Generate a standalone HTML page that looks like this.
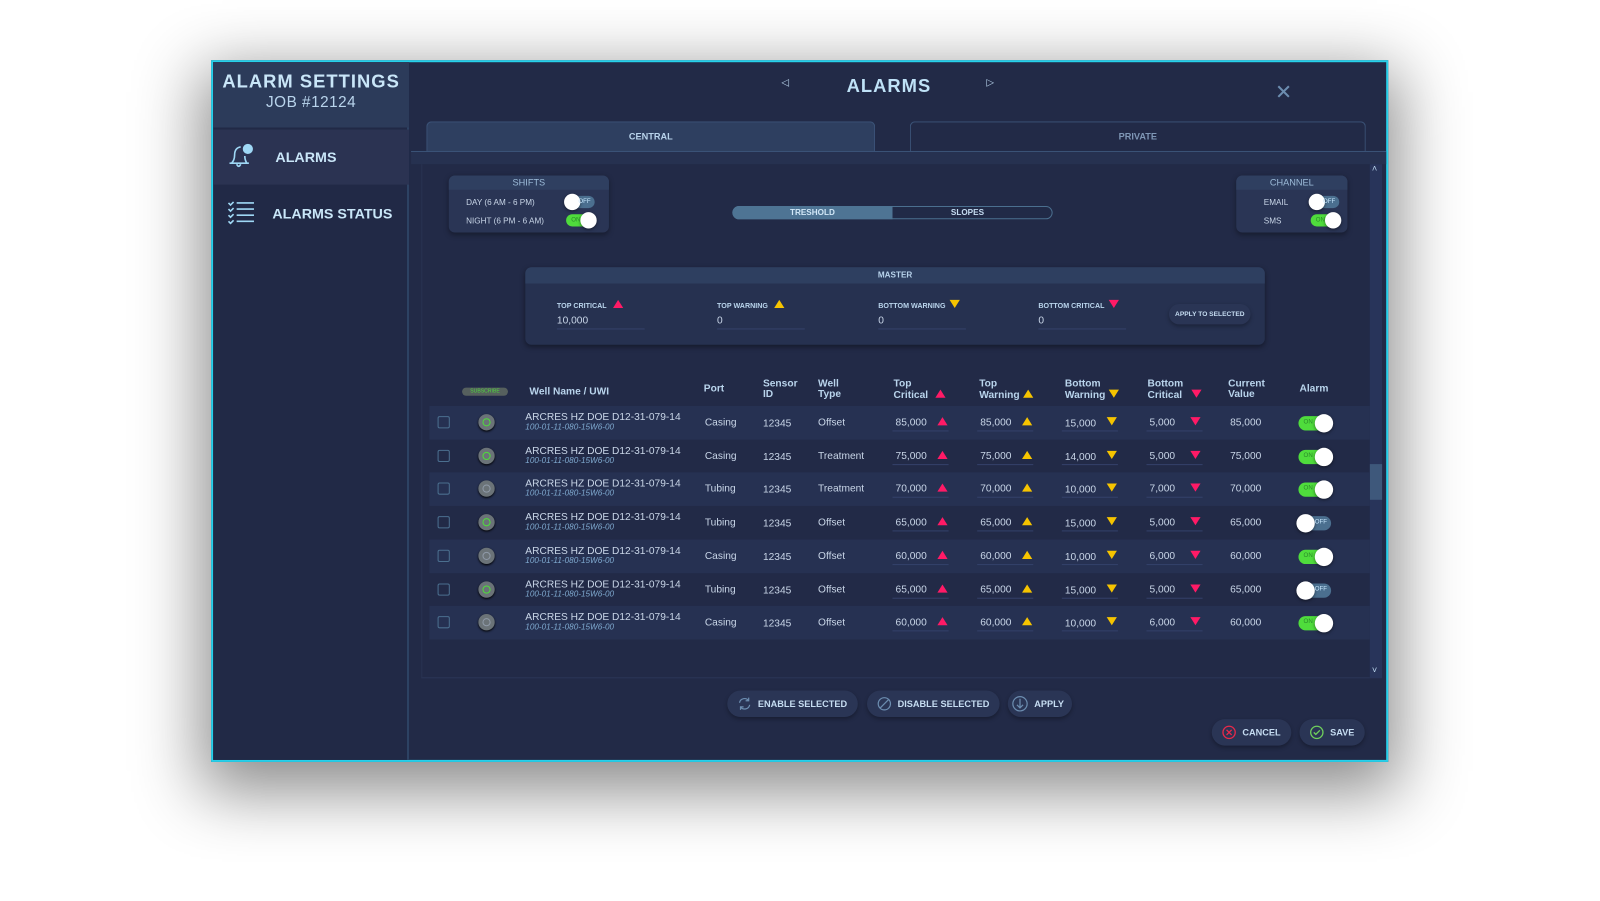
<!DOCTYPE html>
<html><head><meta charset="utf-8">
<style>
*{margin:0;padding:0;box-sizing:border-box}
html,body{width:1600px;height:900px;overflow:hidden;background:#fff;font-family:"Liberation Sans",sans-serif}
#stage{position:absolute;left:0;top:0;width:1569px;height:883px;transform:scale(1.02);transform-origin:0 0}
.a{position:absolute}
.frame{left:207px;top:59px;width:1154px;height:688px;border:2px solid #27d0ea;background:#222a47;box-shadow:0 20px 60px 10px rgba(0,0,0,.45)}
.lt{color:#b9d4ec}
.tg{position:absolute;width:28px;height:12px;border-radius:6px}
.tg.on{background:#4fdc3c}.tg.off{background:#4b6f8f}
.tg b{position:absolute;top:-2px;width:16px;height:16px;border-radius:50%;background:#fff;box-shadow:0 1px 3px rgba(0,0,0,.5)}
.tg.on b{right:-2px}.tg.off b{left:-2px}
.tg i{position:absolute;font-style:normal;font-size:6px;top:3px;color:#c8e8ff}
.tg.on i{left:5px;color:#2a8a2a}.tg.off i{right:4px}
.row{position:absolute;left:421px;width:922px;height:33px}
.row.l{background:#263152}
.c{position:absolute;font-size:10px;color:#c9d6e8}
.h{position:absolute;font-size:10px;font-weight:bold;color:#b9d4ec;line-height:10px}
.up,.dn{display:inline-block;width:0;height:0;border-left:5px solid transparent;border-right:5px solid transparent}
.up{border-bottom:8px solid}.dn{border-top:8px solid}
.r{color:#ff1a66}.y{color:#f6c400}
.ul{position:absolute;height:1px;background:#34416a}
.btn{position:absolute;height:26px;border-radius:13px;background:#2a3555;font-size:9px;font-weight:bold;color:#c6ddf2;display:flex;align-items:center;padding:0 10px;gap:6px;box-shadow:0 2px 4px rgba(0,0,0,.3)}
</style></head><body><div id="stage">
<div class="a frame"></div>
<!-- sidebar -->
<div class="a" style="left:209px;top:61px;width:192px;height:684px;background:#212946;border-right:2px solid #2d4263"></div>
<div class="a" style="left:209px;top:61px;width:192px;height:64px;background:#2c3b5a"></div>
<div class="a lt" style="left:209px;top:70px;width:192px;text-align:center;font-weight:bold;font-size:18px;letter-spacing:1px;color:#c9e6f8">ALARM SETTINGS</div>
<div class="a lt" style="left:209px;top:92px;width:192px;text-align:center;font-size:15px;letter-spacing:.5px">JOB #12124</div>
<div class="a" style="left:209px;top:127px;width:192px;height:54px;background:#2b3352"></div>
<svg class="a" style="left:222px;top:138px" width="30" height="30" viewBox="0 0 30 30"><path d="M5 22 Q8 19 8 14 Q8 7 14 6 M20 22 Q18 19 18 15 M3 22 H22 M10 23 Q12 27 14 23" fill="none" stroke="#9fd8f5" stroke-width="1.6"/><circle cx="21" cy="8" r="5" fill="#9fd8f5"/></svg>
<div class="a" style="left:270px;top:146px;font-size:14px;font-weight:bold;color:#c9e6f8">ALARMS</div>
<svg class="a" style="left:222px;top:196px" width="30" height="24" viewBox="0 0 30 24"><g stroke="#9fd8f5" stroke-width="1.6" fill="none"><path d="M2 3l2 2 3-3M2 9l2 2 3-3M2 15l2 2 3-3M2 21l2 2 3-3"/><path d="M10 3h17M10 9h17M10 15h17M10 21h17"/></g></svg>
<div class="a" style="left:267px;top:201px;font-size:14px;font-weight:bold;color:#c9e6f8">ALARMS STATUS</div>
<!-- top -->
<div class="a" style="left:766px;top:76px;font-size:10px;color:#b9d4ec">◁</div>
<div class="a" style="left:830px;top:74px;font-size:18px;font-weight:bold;letter-spacing:1px;color:#bfe2f7">ALARMS</div>
<div class="a" style="left:967px;top:76px;font-size:10px;color:#b9d4ec">▷</div>
<div class="a" style="left:1250px;top:78px;font-size:20px;color:#6c8db0">✕</div>
<div class="a" style="left:418px;top:119px;width:440px;height:30px;background:#2e3f60;border:1px solid #3c5479;border-bottom:none;border-radius:5px 5px 0 0;text-align:center;font-size:9px;font-weight:bold;line-height:28px;color:#b9d4ec">CENTRAL</div>
<div class="a" style="left:892px;top:119px;width:447px;height:30px;border:1px solid #3c5479;border-bottom:none;border-radius:5px 5px 0 0;text-align:center;font-size:9px;font-weight:bold;line-height:28px;color:#7f97b6">PRIVATE</div>
<div class="a" style="left:403px;top:148px;width:956px;height:1px;background:#3c5479"></div>
<div class="a" style="left:403px;top:149px;width:956px;height:12px;background:#263150"></div>
<div class="a" style="left:413px;top:161px;width:930px;height:504px;border-left:1px solid #283251;border-bottom:1px solid #2b3656"></div>
<!-- scrollbar -->
<div class="a" style="left:1343px;top:161px;width:12px;height:504px;background:#28345a"></div>
<div class="a" style="left:1343px;top:455px;width:12px;height:35px;background:#3e587b"></div>
<div class="a" style="left:1345px;top:160px;font-size:9px;color:#b9d4ec">˄</div>
<div class="a" style="left:1345px;top:652px;font-size:9px;color:#b9d4ec">˅</div>
<!-- shifts -->
<div class="a" style="left:440px;top:172px;width:157px;height:56px;background:#2a3555;border-radius:6px;box-shadow:0 2px 5px rgba(0,0,0,.35)"></div>
<div class="a" style="left:440px;top:172px;width:157px;height:14px;background:#2f3f60;border-radius:6px 6px 0 0;text-align:center;font-size:9px;color:#9dbcd9;line-height:14px">SHIFTS</div>
<div class="a c" style="left:457px;top:194px;font-size:8px">DAY (6 AM - 6 PM)</div>
<div class="a c" style="left:457px;top:212px;font-size:8px">NIGHT (6 PM - 6 AM)</div>
<div class="tg off" style="left:555px;top:192px"><b></b><i>OFF</i></div>
<div class="tg on" style="left:555px;top:210px"><b></b><i>ON</i></div>
<!-- tabs -->
<div class="a" style="left:718px;top:202px;width:314px;height:13px;border:1px solid #4b6f8f;border-radius:7px;background:#212a47"></div>
<div class="a" style="left:718px;top:202px;width:157px;height:13px;background:#4e7494;border-radius:7px 0 0 7px;text-align:center;font-size:8px;font-weight:bold;color:#d2e8f8;line-height:13px">TRESHOLD</div>
<div class="a" style="left:875px;top:202px;width:147px;height:13px;text-align:center;font-size:8px;font-weight:bold;color:#c6ddf2;line-height:13px">SLOPES</div>
<!-- channel -->
<div class="a" style="left:1212px;top:172px;width:109px;height:56px;background:#2a3555;border-radius:6px;box-shadow:0 2px 5px rgba(0,0,0,.35)"></div>
<div class="a" style="left:1212px;top:172px;width:109px;height:14px;background:#2f3f60;border-radius:6px 6px 0 0;text-align:center;font-size:9px;color:#9dbcd9;line-height:14px">CHANNEL</div>
<div class="a c" style="left:1239px;top:194px;font-size:8px">EMAIL</div>
<div class="a c" style="left:1239px;top:212px;font-size:8px">SMS</div>
<div class="tg off" style="left:1285px;top:192px"><b></b><i>OFF</i></div>
<div class="tg on" style="left:1285px;top:210px"><b></b><i>ON</i></div>
<!-- master -->
<div class="a" style="left:515px;top:262px;width:725px;height:76px;background:#263150;border-radius:6px;box-shadow:0 2px 5px rgba(0,0,0,.4)"></div>
<div class="a" style="left:515px;top:262px;width:725px;height:16px;background:#2e3f60;border-radius:6px 6px 0 0;text-align:center;font-size:8px;font-weight:bold;line-height:16px;color:#b9d4ec">MASTER</div>
<div class="a h" style="left:546px;top:294px;font-size:7px">TOP CRITICAL <span class="up r" style="margin-left:4px"></span></div>
<div class="a h" style="left:703px;top:294px;font-size:7px">TOP WARNING <span class="up y" style="margin-left:4px"></span></div>
<div class="a h" style="left:861px;top:294px;font-size:7px">BOTTOM WARNING <span class="dn y" style="margin-left:2px"></span></div>
<div class="a h" style="left:1018px;top:294px;font-size:7px">BOTTOM CRITICAL <span class="dn r" style="margin-left:2px"></span></div>
<div class="a c" style="left:546px;top:309px">10,000</div><div class="ul" style="left:546px;top:322px;width:86px"></div>
<div class="a c" style="left:703px;top:309px">0</div><div class="ul" style="left:703px;top:322px;width:86px"></div>
<div class="a c" style="left:861px;top:309px">0</div><div class="ul" style="left:861px;top:322px;width:86px"></div>
<div class="a c" style="left:1018px;top:309px">0</div><div class="ul" style="left:1018px;top:322px;width:86px"></div>
<div class="btn" style="left:1146px;top:298px;height:20px;font-size:6.5px;padding:0 6px">APPLY TO SELECTED</div>
<!-- table header -->
<div class="a" style="left:453px;top:380px;width:45px;height:8px;border-radius:4px;background:#56605e;font-size:5px;color:#4fdc3c;text-align:center;line-height:8px">SUBSCRIBE</div>
<div class="h" style="left:519px;top:380px">Well Name / UWI</div>
<div class="h" style="left:690px;top:377px">Port</div>
<div class="h" style="left:748px;top:372px">Sensor<br>ID</div>
<div class="h" style="left:802px;top:372px">Well<br>Type</div>
<div class="h" style="left:876px;top:372px">Top<br>Critical <span class="up r" style="margin-left:4px"></span></div>
<div class="h" style="left:960px;top:372px">Top<br>Warning <span class="up y" style="margin-left:1px"></span></div>
<div class="h" style="left:1044px;top:372px">Bottom<br>Warning <span class="dn y" style="margin-left:1px"></span></div>
<div class="h" style="left:1125px;top:372px">Bottom<br>Critical <span class="dn r" style="margin-left:6px"></span></div>
<div class="h" style="left:1204px;top:372px">Current<br>Value</div>
<div class="h" style="left:1274px;top:377px">Alarm</div>
<div id="rows"></div>
<!-- bottom buttons -->
<div class="btn" style="left:713px;top:677px"><svg width="14" height="14" viewBox="0 0 14 14"><path d="M2 6A5 5 0 0 1 11 4M12 8A5 5 0 0 1 3 10M11 1v3H8M3 13v-3h3" fill="none" stroke="#6c8db0" stroke-width="1.2"/></svg>ENABLE SELECTED</div>
<div class="btn" style="left:850px;top:677px"><svg width="14" height="14" viewBox="0 0 14 14"><circle cx="7" cy="7" r="6" fill="none" stroke="#6c8db0" stroke-width="1.2"/><path d="M3 11L11 3" stroke="#6c8db0" stroke-width="1.2"/></svg>DISABLE SELECTED</div>
<div class="btn" style="left:988px;top:677px;padding:0 8px 0 4px"><svg width="16" height="16" viewBox="0 0 16 16"><circle cx="8" cy="8" r="7" fill="none" stroke="#6c8db0" stroke-width="1.2"/><path d="M8 3v9M5 9l3 3 3-3" fill="none" stroke="#6c8db0" stroke-width="1.2"/></svg>APPLY</div>
<div class="btn" style="left:1188px;top:705px"><svg width="14" height="14" viewBox="0 0 14 14"><circle cx="7" cy="7" r="6" fill="none" stroke="#e8294a" stroke-width="1.3"/><path d="M4.5 4.5l5 5M9.5 4.5l-5 5" stroke="#e8294a" stroke-width="1.3"/></svg>CANCEL</div>
<div class="btn" style="left:1274px;top:705px"><svg width="14" height="14" viewBox="0 0 14 14"><circle cx="7" cy="7" r="6" fill="none" stroke="#6fcf5c" stroke-width="1.3"/><path d="M4 7l2 2 4-4" fill="none" stroke="#6fcf5c" stroke-width="1.3"/></svg>SAVE</div>
</div>
<script>
var d=[["Casing","Offset","85,000","85,000","15,000","5,000","85,000",1,1],
["Casing","Treatment","75,000","75,000","14,000","5,000","75,000",1,1],
["Tubing","Treatment","70,000","70,000","10,000","7,000","70,000",0,1],
["Tubing","Offset","65,000","65,000","15,000","5,000","65,000",1,0],
["Casing","Offset","60,000","60,000","10,000","6,000","60,000",0,1],
["Tubing","Offset","65,000","65,000","15,000","5,000","65,000",1,0],
["Casing","Offset","60,000","60,000","10,000","6,000","60,000",0,1]];
var h="";
d.forEach(function(r,i){var t=398+i*32.7;var cy=t+16;
h+='<div class="row'+(i%2==0?' l':'')+'" style="top:'+t+'px"></div>';
h+='<div class="a" style="left:429px;top:'+(cy-6)+'px;width:12px;height:12px;border:1px solid #4b6f8f;border-radius:2px"></div>';
h+='<div class="a" style="left:469px;top:'+(cy-8)+'px;width:16px;height:16px;border-radius:50%;background:#6b7378;box-shadow:0 1px 2px #000"><div style="position:absolute;left:4px;top:4px;width:8px;height:8px;border-radius:50%;border:1.5px solid '+(r[7]?'#4fdc3c':'#8f9aa8')+'"></div></div>';
h+='<div class="c" style="left:515px;top:'+(cy-10)+'px">ARCRES HZ DOE D12-31-079-14</div>';
h+='<div class="c" style="left:515px;top:'+(cy)+'px;font-size:8px;font-style:italic;color:#7fa9cf">100-01-11-080-15W6-00</div>';
h+='<div class="c" style="left:691px;top:'+(cy-5)+'px">'+r[0]+'</div>';
h+='<div class="c" style="left:748px;top:'+(cy-4)+'px">12345</div>';
h+='<div class="c" style="left:802px;top:'+(cy-5)+'px">'+r[1]+'</div>';
var cols=[[878,r[2],'up r',919],[961,r[3],'up y',1002],[1044,r[4],'dn y',1085],[1127,r[5],'dn r',1167]];
cols.forEach(function(c,j){h+='<div class="c" style="left:'+c[0]+'px;top:'+(cy-5+(j==2?1:0))+'px">'+c[1]+'</div>';
h+='<span class="a '+c[2]+'" style="left:'+c[3]+'px;top:'+(cy-5)+'px"></span>';
h+='<div class="ul" style="left:'+(c[0]-3)+'px;top:'+(cy+8)+'px;width:55px"></div>';});
h+='<div class="c" style="left:1206px;top:'+(cy-5)+'px">'+r[6]+'</div>';
h+='<div class="tg '+(r[8]?'on':'off')+'" style="left:1273px;top:'+(cy-6)+'px;width:32px;height:14px;border-radius:7px"><b style="width:18px;height:18px"></b><i>'+(r[8]?'ON':'OFF')+'</i></div>';
});
document.getElementById('rows').outerHTML=h;
</script>
</body></html>
